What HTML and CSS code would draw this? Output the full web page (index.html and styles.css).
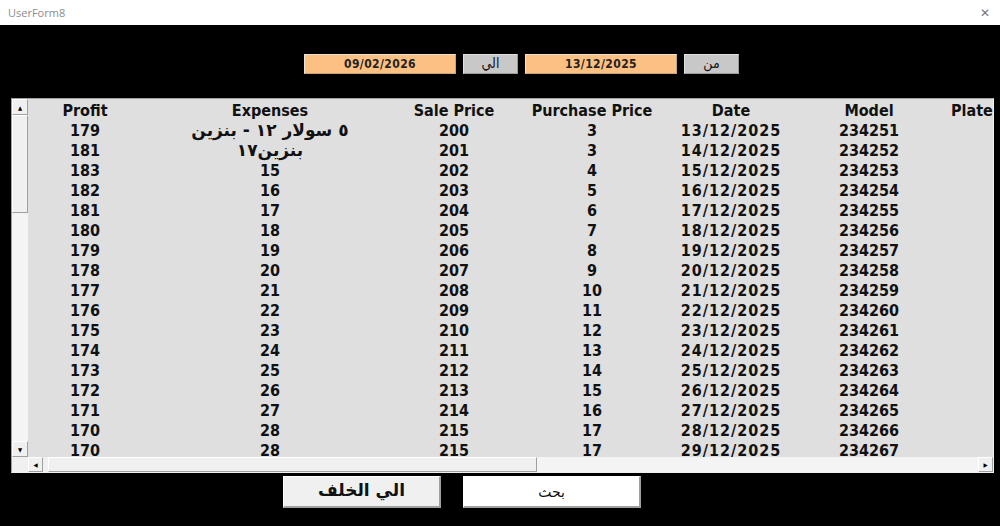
FILE: index.html
```html
<!DOCTYPE html>
<html lang="ar">
<head>
  <meta charset="UTF-8" />
  <title>UserForm8</title>
  <link rel="stylesheet" href="styles.css">
</head>
<body>
  <div class="titlebar">
    <span class="title">UserForm8</span>
    <span class="close">✕</span>
  </div>

  <div class="form">
    <div class="date-row">
      <div class="date-box">09/02/2026</div>
      <div class="label-btn">الي</div>
      <div class="date-box">13/12/2025</div>
      <div class="label-btn">من</div>
    </div>

    <div class="listbox">
      <div class="vscroll">
        <div class="sb-btn">&#9650;</div>
        <div class="sb-thumb-v"></div>
        <div class="sb-track"></div>
        <div class="sb-btn">&#9660;</div>
      </div>
      <div class="list-body" id="listBody">
        <div class="row head">
          <span>Profit</span><span>Expenses</span><span>Sale Price</span><span>Purchase Price</span><span>Date</span><span>Model</span><span class="plate">Plate</span>
        </div>
      </div>
      <div class="corner"></div>
      <div class="hscroll">
        <div class="sb-btn small">&#9664;</div>
        <div class="sb-thumb-h"></div>
        <div class="sb-track"></div>
        <div class="sb-btn small">&#9654;</div>
      </div>
    </div>

    <div class="actions">
      <button class="back-btn">الي الخلف</button>
      <button class="search-btn">بحث</button>
    </div>
  </div>

  <script>
    const rows = [
      [179, '٥ سولار  ١٢ - بنزين', 200, 3],
      [181, 'بنزين١٧', 201, 3],
      [183, 15, 202, 4],
      [182, 16, 203, 5],
      [181, 17, 204, 6],
      [180, 18, 205, 7],
      [179, 19, 206, 8],
      [178, 20, 207, 9],
      [177, 21, 208, 10],
      [176, 22, 209, 11],
      [175, 23, 210, 12],
      [174, 24, 211, 13],
      [173, 25, 212, 14],
      [172, 26, 213, 15],
      [171, 27, 214, 16],
      [170, 28, 215, 17],
      [170, 28, 215, 17]
    ];

    const body = document.getElementById('listBody');
    rows.forEach((r, i) => {
      const day = String(13 + i).padStart(2, '0');
      const row = document.createElement('div');
      row.className = 'row';
      const exp = typeof r[1] === 'string' ? `<span class="ar" dir="rtl">${r[1]}</span>` : `<span>${r[1]}</span>`;
      row.innerHTML = `<span>${r[0]}</span>${exp}<span>${r[2]}</span><span>${r[3]}</span>` +
        `<span class="date">${day}/12/2025</span><span>${234251 + i}</span><span class="plate"></span>`;
      body.appendChild(row);
    });
  </script>
</body>
</html>
```

FILE: styles.css
```css
* {
  box-sizing: border-box;
  margin: 0;
  padding: 0;
}

body {
  width: 1000px;
  height: 526px;
  overflow: hidden;
  background: #000;
  font-family: 'DejaVu Sans Condensed', 'DejaVu Sans', sans-serif;
}

.titlebar {
  height: 25px;
  background: #fff;
  display: flex;
  justify-content: space-between;
  align-items: center;
  padding: 0 10px 0 8px;
}

.title {
  font-family: 'Open Sans', sans-serif;
  font-size: 11px;
  color: #8c8c8c;
}

.close {
  font-family: 'DejaVu Sans', sans-serif;
  font-size: 12px;
  color: #777;
}

.form {
  height: 501px;
  background: #000;
}

.date-row {
  display: flex;
  padding: 29px 0 0 304px;
  height: 49px;
}

.date-box {
  width: 152px;
  height: 20px;
  background: #fdc083;
  border: 1px solid #e9e2d8;
  border-right-color: #c9a27a;
  border-bottom-color: #c9a27a;
  font-weight: bold;
  font-size: 12px;
  letter-spacing: 0.4px;
  color: #222;
  display: flex;
  justify-content: center;
  align-items: center;
}

.label-btn {
  width: 55px;
  height: 20px;
  margin: 0 7px;
  background: #c8c8c8;
  border: 1px solid #e0e0e0;
  border-right-color: #9a9a9a;
  border-bottom-color: #9a9a9a;
  font-size: 14px;
  color: #111;
  display: flex;
  justify-content: center;
  align-items: center;
  padding-bottom: 2px;
}

.label-btn:last-child {
  margin-right: 0;
}

.listbox {
  margin: 24px 0 0 11px;
  width: 983px;
  height: 375px;
  background: #dfdfdf;
  border: 1px solid #a0a0a0;
  border-right-color: #f0f0f0;
  border-bottom-color: #f0f0f0;
  display: grid;
  grid-template-columns: 16px 1fr;
  grid-template-rows: 358px 15px;
  overflow: hidden;
}

.vscroll {
  display: flex;
  flex-direction: column;
  background: #f0f0f0;
}

.sb-btn {
  width: 16px;
  height: 16px;
  flex-shrink: 0;
  background: #f0f0f0;
  border: 1px solid #fff;
  border-right-color: #a0a0a0;
  border-bottom-color: #a0a0a0;
  font-size: 6px;
  color: #000;
  display: flex;
  justify-content: center;
  align-items: center;
}

.sb-btn.small {
  width: 15px;
  height: 15px;
}

.sb-thumb-v {
  height: 98px;
  flex-shrink: 0;
  background: #f0f0f0;
  border: 1px solid #fff;
  border-right-color: #a0a0a0;
  border-bottom-color: #a0a0a0;
}

.sb-track {
  flex: 1;
  background: #f4f4f4;
}

.list-body {
  overflow: hidden;
  padding-top: 1px;
}

.row {
  display: grid;
  grid-template-columns: 114px 256px 112px 164px 114px 162px 60px;
  height: 20px;
  line-height: 19px;
  align-items: center;
  font-weight: bold;
  font-size: 16px;
  color: #111;
  white-space: nowrap;
}

.row span {
  text-align: center;
}

.row .date {
  letter-spacing: 1px;
}

.row .ar {
  font-family: 'DejaVu Sans', sans-serif;
  font-size: 17px;
}

.row .plate {
  text-align: left;
  padding-left: 1px;
}

.corner {
  background: #f0f0f0;
}

.hscroll {
  display: flex;
  background: #f0f0f0;
}

.sb-thumb-h {
  width: 489px;
  margin-left: 5px;
  flex-shrink: 0;
  background: #f0f0f0;
  border: 1px solid #fff;
  border-right-color: #a0a0a0;
  border-bottom-color: #a0a0a0;
}

.actions {
  display: flex;
  padding: 3px 0 0 283px;
  gap: 22px;
}

.back-btn {
  width: 158px;
  height: 32px;
  background: #f0f0f0;
  border: 1px solid #fff;
  border-right: 2px solid #a0a0a0;
  border-bottom: 2px solid #a0a0a0;
  font-family: 'DejaVu Sans', sans-serif;
  font-weight: bold;
  font-size: 17px;
  color: #111;
  padding-bottom: 3px;
}

.search-btn {
  width: 178px;
  height: 32px;
  background: #fff;
  border: 1px solid #fff;
  border-right: 2px solid #a0a0a0;
  border-bottom: 2px solid #a0a0a0;
  font-family: 'DejaVu Sans', sans-serif;
  font-size: 14px;
  color: #111;
}
```
